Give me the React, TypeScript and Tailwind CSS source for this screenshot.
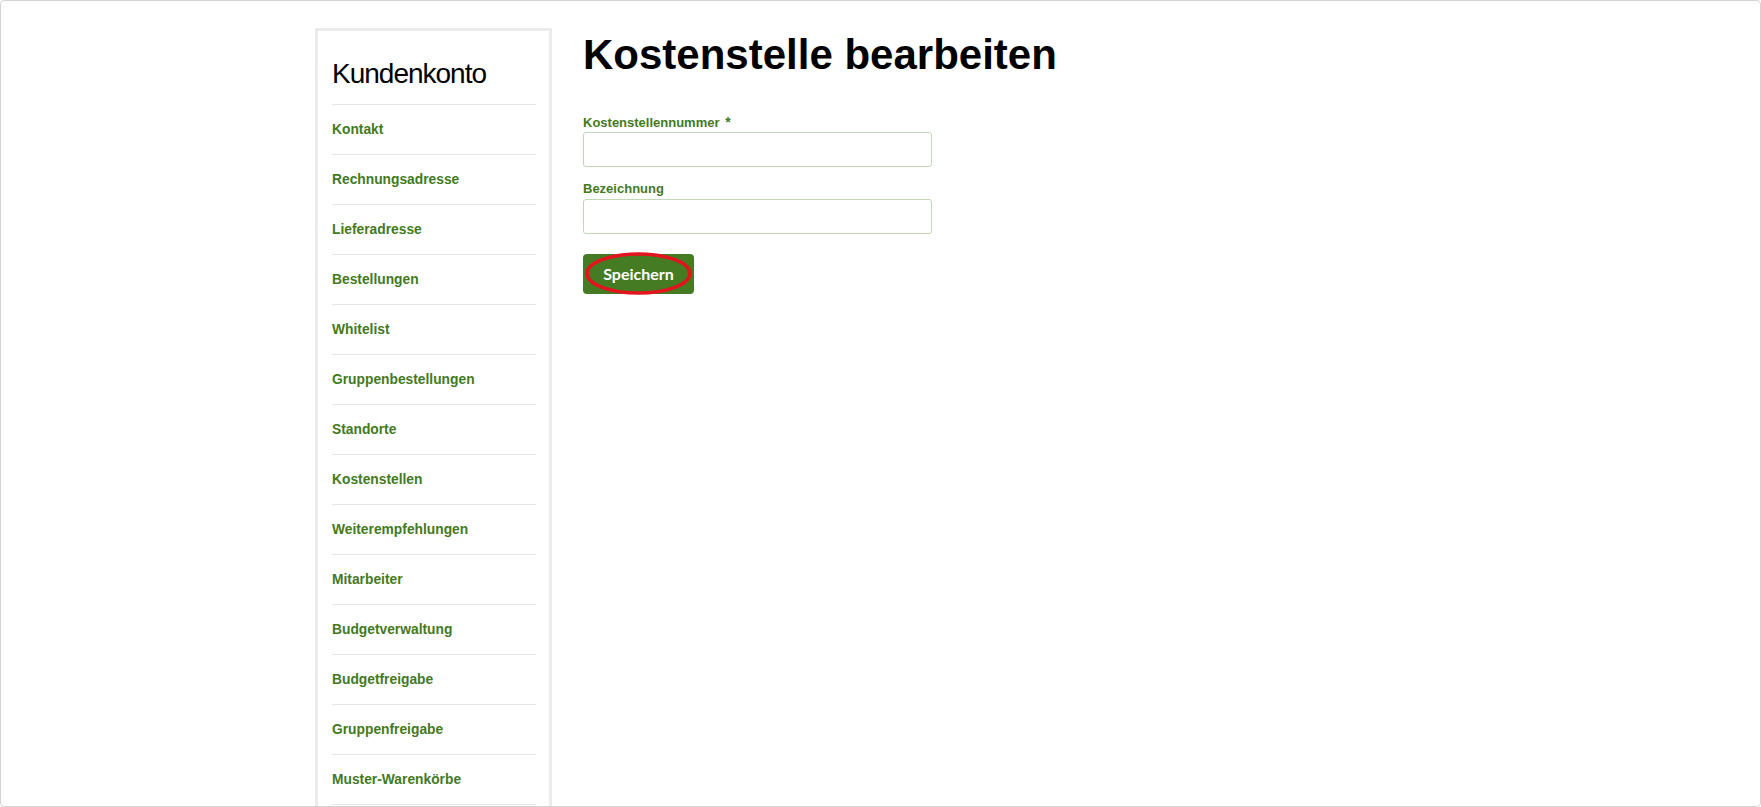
import React from "react";

const items = [
  "Kontakt",
  "Rechnungsadresse",
  "Lieferadresse",
  "Bestellungen",
  "Whitelist",
  "Gruppenbestellungen",
  "Standorte",
  "Kostenstellen",
  "Weiterempfehlungen",
  "Mitarbeiter",
  "Budgetverwaltung",
  "Budgetfreigabe",
  "Gruppenfreigabe",
  "Muster-Warenkörbe",
];

export default function App() {
  return (
    <div
      className="h-[807px] w-full overflow-hidden rounded-[4px] border border-[#d4d4d4] bg-white"
      style={{ fontFamily: '"Liberation Sans", Arial, sans-serif' }}
    >
      <div className="mx-auto flex w-[1131px] items-start">
        <aside className="mt-[27px] h-[800px] w-[237px] shrink-0 border-[3px] border-[#ebebeb] pl-[14px] pr-[13px]">
          <div className="border-b border-[#e6e6e6] pt-[26px] pb-[13px]">
            <h2 className="text-[28px] leading-[34px] tracking-[-1px] text-black">Kundenkonto</h2>
          </div>
          <nav className="flex flex-col">
            {items.map((it) => (
              <a
                key={it}
                href="#"
                className="block h-[50px] border-b border-[#e6e6e6] text-[13.8px] font-bold leading-[49px] text-[#437a1d]"
              >
                {it}
              </a>
            ))}
          </nav>
        </aside>
        <main className="ml-[31px] flex flex-col">
          <h1 className="mt-[31px] text-[42px] font-bold leading-[46px] text-black">
            Kostenstelle bearbeiten
          </h1>
          <label className="mt-[36px] h-[16px] text-[13px] font-bold leading-[16px] text-[#437a1d]">
            Kostenstellennummer <span className="ml-[2px] text-[14px] leading-[16px]">*</span>
          </label>
          <input
            type="text"
            className="mt-[2px] h-[35px] w-[349px] rounded-[3px] border border-[#c3d6b8] bg-white outline-none"
          />
          <label className="mt-[14px] h-[16px] text-[13px] font-bold leading-[16px] text-[#437a1d]">
            Bezeichnung
          </label>
          <input
            type="text"
            className="mt-[2px] h-[35px] w-[349px] rounded-[3px] border border-[#c3d6b8] bg-white outline-none"
          />
          <div className="relative mt-[20px] h-[40px] w-[111px]">
            <button
              type="button"
              className="flex h-[40px] w-[111px] items-center justify-center rounded-[4px] bg-[#457b22] text-[16px] font-bold text-white"
              style={{ fontFamily: 'Lato, "Open Sans", sans-serif' }}
            >
              Speichern
            </button>
            <svg
              className="pointer-events-none absolute left-[2px] top-[-2px]"
              width="107"
              height="43"
              viewBox="0 0 107 43"
            >
              <ellipse cx="53.5" cy="21.5" rx="51.5" ry="19.5" fill="none" stroke="#e3141e" strokeWidth="3.5" />
            </svg>
          </div>
        </main>
      </div>
    </div>
  );
}
